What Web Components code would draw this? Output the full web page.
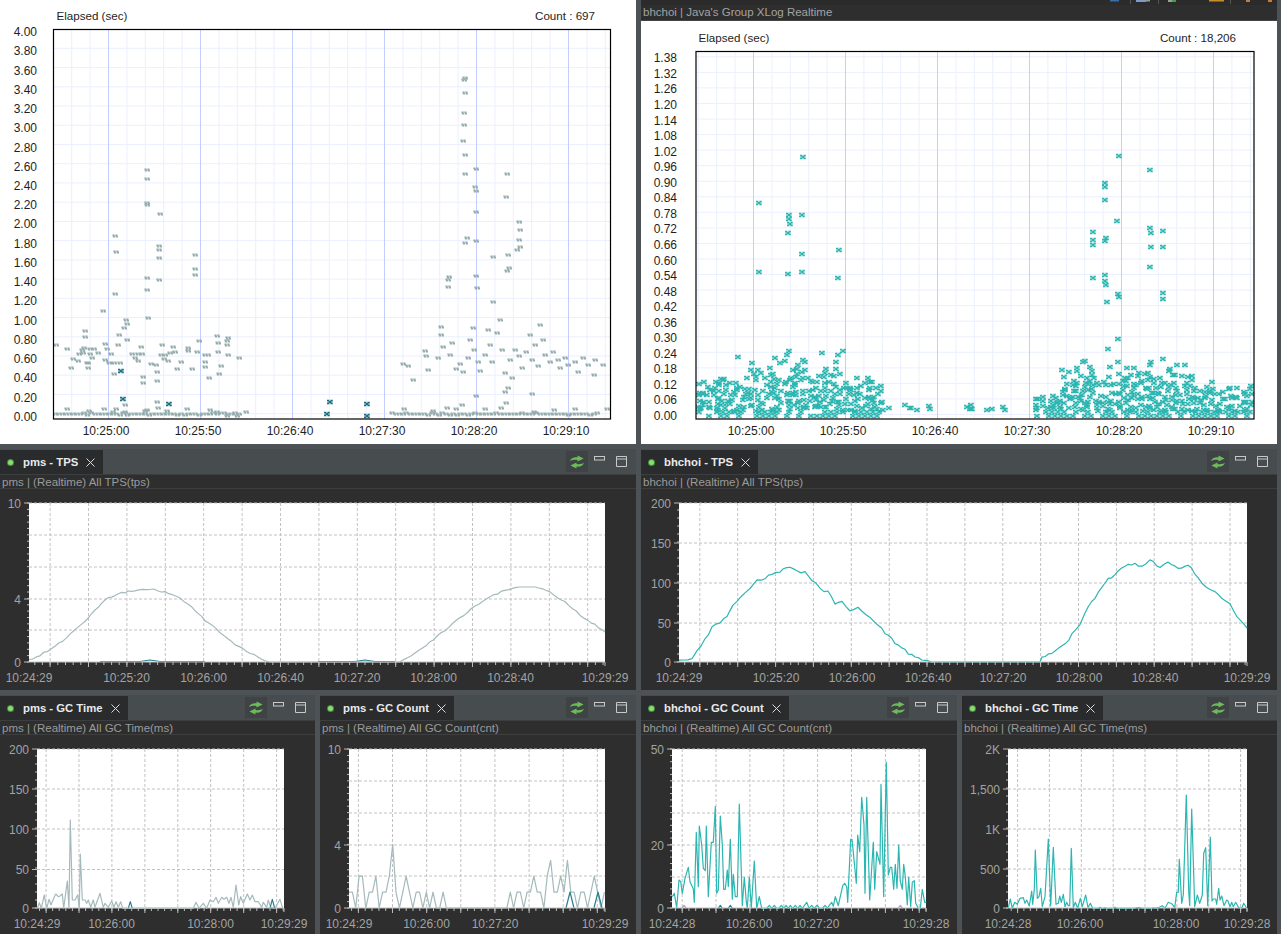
<!DOCTYPE html>
<html>
<head>
<meta charset="utf-8">
<title>Scouter dashboard</title>
<style>
    html, body { margin: 0; padding: 0; background: #4d5256; }
    body { width: 1281px; height: 934px; overflow: hidden; font-family: "Liberation Sans", Arial, sans-serif; }
</style>
</head>
<body>
<dash-board>
    <xlog-panel style="grid-column: span 2" name="pms"></xlog-panel>
    <xlog-panel style="grid-column: span 2" name="bhchoi" heading="bhchoi | Java's Group XLog Realtime"></xlog-panel>
    <trend-panel style="grid-column: span 2" name="pmsTps" tab="pms - TPS" sub="pms | (Realtime) All TPS(tps)"></trend-panel>
    <trend-panel style="grid-column: span 2" name="bhchoiTps" tab="bhchoi - TPS" sub="bhchoi | (Realtime) All TPS(tps)"></trend-panel>
    <trend-panel name="pmsGcTime" tab="pms - GC Time" sub="pms | (Realtime) All GC Time(ms)"></trend-panel>
    <trend-panel name="pmsGcCount" tab="pms - GC Count" sub="pms | (Realtime) All GC Count(cnt)"></trend-panel>
    <trend-panel name="bhchoiGcCount" tab="bhchoi - GC Count" sub="bhchoi | (Realtime) All GC Count(cnt)"></trend-panel>
    <trend-panel name="bhchoiGcTime" tab="bhchoi - GC Time" sub="bhchoi | (Realtime) All GC Time(ms)"></trend-panel>
</dash-board>

<script>
const GREY = '#a5babc';
const TEAL = '#2db6b1';
const DARK = '#2a7f8e';

function seeded(seed) {
    let s = seed;
    return () => {
        s = (s * 1664525 + 1013904223) % 4294967296;
        return s / 4294967296;
    };
}

// coordinates read off the zoomed crops, 3x from the given origin
function fromZoom(list, ox, oy) {
    return list.map(([x, y]) => [ox + x / 3, oy + y / 3]);
}

function makePath(points) {
    return points.map((p, i) => (i ? 'L' : 'M') + p[0].toFixed(1) + ' ' + p[1].toFixed(1)).join('');
}

function jag(points, amount, seed) {
    const rnd = seeded(seed);
    const out = [];
    for (let i = 0; i < points.length - 1; i++) {
        const [x1, y1] = points[i];
        const [x2, y2] = points[i + 1];
        const n = Math.max(1, Math.round((x2 - x1) / 4));
        for (let k = 0; k < n; k++) {
            const t = k / n;
            const flat = y1 === y2;
            out.push([x1 + (x2 - x1) * t, y1 + (y2 - y1) * t + (flat ? 0 : (rnd() - 0.5) * amount)]);
        }
    }
    out.push(points[points.length - 1]);
    return out;
}

const PMS_TPS = [[29,660],[40,655],[55,647],[70,634],[85,621],[95,610],[105,600],[115,595],[125,592],[135,591],[150,589],[165,592],[180,598],[195,610],[205,620],[220,632],[235,645],[250,653],[262,659],[270,662],[400,662],[415,653],[430,642],[445,630],[460,618],[475,606],[490,597],[505,590],[520,587],[535,587],[550,592],[565,602],[580,615],[595,625],[605,632]];
const BH_TPS = [[679,661],[692,660],[697,650],[705,640],[712,628],[720,622],[727,617],[733,605],[741,597],[750,588],[757,581],[765,578],[772,575],[780,572],[790,566],[797,570],[805,573],[812,580],[820,589],[828,592],[835,603],[842,600],[850,612],[858,607],[866,615],[875,622],[885,633],[895,643],[905,650],[915,658],[925,661],[935,662],[1040,662],[1042,658],[1052,653],[1062,647],[1072,635],[1080,625],[1085,612],[1095,597],[1105,582],[1115,575],[1125,565],[1135,563],[1142,567],[1150,560],[1160,568],[1168,562],[1178,568],[1188,565],[1198,577],[1206,588],[1215,592],[1222,600],[1230,605],[1240,620],[1247,628]];

const PMS_GC_TIME = fromZoom([[112,265],[118,248],[124,265],[133,225],[140,265],[147,238],[153,255],[160,238],[167,222],[175,230],[180,228],[187,222],[191,265],[202,183],[207,265],[211,0],[217,240],[225,240],[233,225],[238,265],[241,102],[247,240],[255,240],[260,250],[265,240],[272,262],[280,240],[285,262],[300,220],[310,262],[315,250],[325,262],[335,243],[342,262],[348,245],[355,262],[362,245],[368,265],[580,265],[588,247],[597,265],[610,250],[620,265],[630,240],[640,245],[648,232],[655,250],[665,232],[672,238],[680,232],[687,250],[693,232],[700,262],[708,195],[716,255],[722,230],[730,250],[742,222],[750,240],[757,225],[765,245],[775,245],[785,262],[790,247],[800,262],[805,240],[812,262],[825,265],[840,238],[848,265]], 0, 820);
const PMS_GC_DARK = fromZoom([[385,265],[391,245],[397,265]], 0, 820);
const PMS_GC_DARK2 = fromZoom([[810,265],[817,238],[824,265]], 0, 820);

const GC_COUNT_VALUES = [1,1,0,2,2,0,1,1,2,0,1,1,2,4,1,0,1,2,1,0,1,1,0,1,0,1,0,0,1,0,0,0,0,0,0,0,0,0,0,0,0,0,0,0,0,0,0,0,1,0,1,1,0,1,1,2,1,1,0,2,3,1,1,2,1,3,1,1,0,1,1,0,1,2,1,0,1];
const PMS_GC_COUNT = GC_COUNT_VALUES.map((v, i) => [349 + i * 3.36, 908 - v * 15.9]);

const BH_GC_COUNT = fromZoom([[22,455],[28,445],[35,488],[42,405],[47,410],[52,445],[60,400],[70,367],[75,410],[85,432],[88,472],[94,262],[100,425],[103,243],[110,300],[115,370],[121,377],[124,243],[130,455],[139,292],[145,292],[151,185],[155,445],[160,435],[166,213],[172,300],[176,433],[181,433],[187,375],[190,425],[196,283],[202,463],[205,388],[211,455],[217,455],[223,177],[229,380],[232,482],[238,397],[244,470],[247,490],[253,397],[259,488],[268,348],[275,490],[283,455],[290,490],[305,490],[313,481],[320,490],[328,481],[335,490],[342,490],[349,481],[356,490],[363,481],[370,490],[376,481],[383,490],[391,481],[398,490],[405,481],[412,490],[425,472],[432,490],[440,481],[447,490],[457,481],[464,490],[472,490],[480,481],[487,490],[493,481],[500,472],[505,484],[511,455],[520,482],[533,422],[539,415],[545,425],[548,472],[557,283],[561,283],[574,415],[578,270],[584,320],[590,157],[597,240],[600,445],[605,157],[614,465],[625,292],[629,433],[635,320],[645,358],[648,118],[656,455],[664,52],[670,390],[676,367],[680,367],[686,433],[691,358],[696,430],[701,300],[706,408],[712,433],[716,358],[721,395],[727,480],[731,397],[737,485],[742,412],[748,407],[752,475],[760,490],[766,490],[772,433],[779,472],[784,472]], 665, 745);
const BH_GC_COUNT_DARK = fromZoom([[160,490],[166,481],[172,490]], 665, 745);
const BH_GC_COUNT_DARK2 = fromZoom([[190,490],[196,481],[202,490]], 665, 745);
const BH_GC_COUNT_PINK = fromZoom([[50,490],[57,481],[64,490]], 665, 745);
const BH_GC_COUNT_PINK2 = fromZoom([[699,490],[706,481],[713,490]], 665, 745);

const BH_GC_TIME = fromZoom([[25,488],[31,462],[37,490],[44,472],[52,478],[60,460],[70,458],[75,475],[80,465],[88,483],[95,438],[98,478],[103,433],[106,315],[112,460],[117,455],[122,430],[127,485],[135,455],[145,282],[152,483],[160,307],[168,478],[175,475],[179,453],[184,472],[190,448],[195,485],[200,472],[205,482],[209,482],[214,310],[220,488],[226,472],[233,490],[241,460],[247,485],[257,450],[264,488],[271,475],[278,490],[295,490],[300,487],[305,490],[310,490],[315,488],[320,490],[340,490],[345,487],[350,490],[405,490],[410,488],[420,488],[425,490],[455,490],[460,488],[465,490],[475,488],[487,482],[495,490],[505,472],[515,476],[524,488],[530,442],[535,442],[538,343],[545,475],[550,450],[559,150],[566,438],[569,482],[575,192],[584,485],[592,450],[599,475],[607,450],[611,325],[617,308],[623,482],[631,276],[636,468],[640,462],[647,462],[650,478],[656,430],[660,465],[665,453],[672,482],[680,465],[684,468],[690,485],[695,472],[700,485],[707,472],[716,488],[725,490],[731,475],[740,490]], 1000, 745);

const TREND_CONFIG = {
    pmsTps: {
        box: [0, 449, 636, 241], plot: [29, 503, 605, 662], start: 11, step: 20,
        yLabels: [['10', 503], ['4', 599], ['0', 662]], hLines: [535, 567, 599, 630], minorY: 6.36,
        xLabels: [['10:24:29', 29], ['10:25:20', 126.5], ['10:26:00', 203.5], ['10:26:40', 280.5], ['10:27:20', 357], ['10:28:00', 433.5], ['10:28:40', 510.5], ['10:29:29', 605]],
        lines: [
            { d: jag(PMS_TPS, 1.8, 7), color: GREY },
            { d: [[100,661.5],[140,661.5],[150,660],[160,661.5],[205,661.5]], color: DARK },
            { d: [[318,661.5],[355,661.5],[365,660],[375,661.5],[395,661.5]], color: DARK }
        ]
    },
    bhchoiTps: {
        box: [641, 449, 636, 241], plot: [679, 503, 1247, 662], start: 11, step: 20,
        yLabels: [['200', 503], ['150', 543], ['100', 583], ['50', 623], ['0', 662]], hLines: [543, 583, 623], minorY: 8,
        xLabels: [['10:24:29', 679], ['10:25:20', 776], ['10:26:00', 852], ['10:26:40', 928], ['10:27:20', 1003], ['10:28:00', 1079], ['10:28:40', 1155], ['10:29:29', 1247]],
        lines: [{ d: jag(BH_TPS, 3, 11), color: TEAL }]
    },
    pmsGcTime: {
        box: [0, 695, 315, 239], plot: [37, 749, 284, 908], start: 11, step: 40,
        yLabels: [['200', 749], ['150', 789], ['100', 829], ['50', 869.5], ['0', 908]], hLines: [789, 829, 869.5], minorY: 8,
        xLabels: [['10:24:29', 37], ['10:26:00', 111.5], ['10:28:00', 210.5], ['10:29:29', 284]],
        lines: [{ d: PMS_GC_TIME, color: GREY }, { d: PMS_GC_DARK, color: DARK }, { d: PMS_GC_DARK2, color: DARK }]
    },
    pmsGcCount: {
        box: [320, 695, 316, 239], plot: [349, 749, 605, 908], start: 11, step: 40,
        yLabels: [['10', 749], ['4', 845], ['0', 908]], hLines: [781, 813, 845, 876], minorY: 6.36,
        xLabels: [['10:24:29', 349], ['10:26:00', 426.5], ['10:27:20', 495], ['10:29:29', 605]],
        lines: [
            { d: PMS_GC_COUNT, color: GREY },
            { d: [[566,908],[570,892],[574,908]], color: DARK },
            { d: [[594,908],[598,892],[602,908]], color: DARK }
        ]
    },
    bhchoiGcCount: {
        box: [641, 695, 316, 239], plot: [672, 749, 926, 908], start: 12, step: 40,
        yLabels: [['50', 749], ['20', 845], ['0', 908]], hLines: [781, 813, 845, 877], minorY: 6.36,
        xLabels: [['10:24:28', 672], ['10:26:00', 749], ['10:27:20', 816], ['10:29:28', 926]],
        lines: [
            { d: BH_GC_COUNT, color: TEAL },
            { d: BH_GC_COUNT_DARK, color: DARK },
            { d: BH_GC_COUNT_DARK2, color: DARK },
            { d: BH_GC_COUNT_PINK, color: '#b79cc4' },
            { d: BH_GC_COUNT_PINK2, color: '#b79cc4' }
        ]
    },
    bhchoiGcTime: {
        box: [962, 695, 315, 239], plot: [1008, 749, 1247, 908], start: 12, step: 40,
        yLabels: [['2K', 749], ['1,500', 789], ['1K', 829], ['500', 869], ['0', 908]], hLines: [789, 829, 869], minorY: 8,
        xLabels: [['10:24:28', 1008], ['10:26:00', 1080], ['10:28:00', 1176], ['10:29:28', 1247]],
        lines: [{ d: BH_GC_TIME, color: TEAL }]
    }
};

const PMS_MARKS = fromZoom([[106,3],[105,22],[103,53],[120,57],[133,58],[120,72],[143,70],[165,42],[170,58],[182,72],[204,46],[208,16],[232,30],[272,52],[247,72],[265,72],[275,72],[255,85],[265,93],[165,90],[178,100],[193,100],[210,100],[115,100],[115,115],[110,100],[125,85],[280,140],[280,160],[322,127],[322,152],[303,103],[318,106],[335,45],[333,75],[345,75],[343,88],[355,93],[370,52],[360,70],[375,67],[393,97],[415,55],[415,62],[440,67],[448,33],[465,75],[475,75],[465,97],[465,112],[382,118],[425,118],[502,18],[505,40],[505,67],[535,25],[532,33],[532,44],[535,75],[568,85],[512,108],[508,133],[478,145],[193,132],[322,215],[325,235],[225,225],[225,245],[290,240],[163,237],[190,245],[500,245],[530,257],[560,258],[18,46],[52,58],[70,88],[85,92],[62,115],[88,72],[100,68],[95,60]], 50, 330).concat([
    [465,78],[464,80],[465,93],[464,113],[464,125],[463,141],[465,155],[465,174],[476,169],[475,187],[476,191],[507,174],[506,197],[519,222],[520,230],[519,240],[520,247],[517,250],[508,255],[509,268],[507,271],[493,257],[476,212],[476,241],[467,238],[465,243],[449,277],[448,287],[448,280],[493,302],[476,276],[477,288],
    [147,170],[147,179],[147,203],[147,205],[160,214],[115,236],[116,252],[159,246],[159,250],[159,258],[195,255],[195,269],[195,275],[147,278],[147,290],[115,294],[159,280],[103,311],[148,318],[126,320],[127,324],[124,328],
    [403,364],[408,366],[413,380],[425,351],[426,356],[428,370],[438,358],[441,327],[441,335],[450,355],[452,343],[456,369],[468,358],[470,340],[473,328],[480,371],[485,355],[488,330],[490,345],[500,320],[502,350],[508,388],[512,378],[515,350],[522,368],[530,335],[535,345],[540,325],[545,355],[550,362],[558,360],[565,358],[575,362],[578,372],[595,360],[603,365],[594,375],
    [443,347],[460,364],[463,372],[474,350],[478,362],[492,362],[497,333],[505,373],[510,360],[519,356],[526,352],[532,360],[538,366],[543,340],[553,352],[560,368],[568,365],[583,358],[588,365],[462,405],[447,408],[476,396],[505,392],[506,403],[532,394]
]);
const PMS_DARK_MARKS = [[121,371],[123,399],[169,404],[330,402],[327,414],[367,404],[367,416]];

const BH_MARKS = [[803,157],[759,203],[789,215],[802,215],[789,219],[790,224],[788,233],[802,254],[839,250],[759,272],[788,274],[802,272],[838,278],[738,357],[789,351],[803,360],[822,353],[836,362],[843,351],[1119,156],[1150,170],[1105,183],[1105,187],[1105,200],[1117,221],[1150,228],[1151,233],[1163,231],[1093,232],[1093,240],[1093,245],[1106,238],[1105,241],[1151,247],[1163,247],[1150,267],[1093,278],[1105,275],[1105,281],[1106,285],[1118,294],[1119,297],[1163,293],[1163,299],[1107,302],[1118,339],[1108,349],[1163,359],[1150,365],[1118,362]];

// lower mass of the right chart, one dot per small cell so white shows between dots
function buildBhMarks() {
    const rnd = seeded(42);
    const seen = new Set();
    const out = BH_MARKS.slice();
    const bands = [[697, 745, 36, 170], [745, 840, 58, 330], [840, 882, 38, 130], [882, 932, 9, 14], [965, 1006, 8, 9], [1035, 1062, 18, 50], [1062, 1195, 52, 480], [1195, 1252, 30, 130]];
    bands.forEach(([a, b, high, count]) => {
        for (let i = 0; i < count; i++) {
            const fall = rnd() * (0.25 + 0.75 * rnd());
            const x = a + rnd() * (b - a);
            const y = 411 - fall * high;
            const key = Math.round(x / 5.5) + '/' + Math.round(y / 4.6);
            if (seen.has(key)) continue;
            seen.add(key);
            out.push([x, y]);
        }
    });
    return out;
}

function bhBottomBand() {
    const rnd = seeded(9);
    const rows = [];
    [[697, 882, 416], [1037, 1252, 416], [699, 880, 412], [1040, 1252, 412]].forEach(([a, b, y]) => {
        for (let x = a; x < b; x += 6) {
            if (rnd() > 0.25) rows.push([x, y]);
        }
    });
    return rows;
}

function pmsBottomBand() {
    const rnd = seeded(5);
    const out = [];
    [[55, 240], [392, 600]].forEach(([a, b]) => {
        for (let x = a; x < b; x += 3.6) out.push([x, 414 + (rnd() - 0.5) * 1.4]);
        for (let x = a + 10; x < b; x += 24) out.push([x + rnd() * 14, 408 + rnd() * 4]);
    });
    return out;
}

function markPath(points, big) {
    // each xlog dot is a tiny two row "x" of pixels
    const shape = big
        ? (x, y) => `M${x - 3} ${y - 2.2}h2.4v1.6h-2.4zM${x + 0.4} ${y - 2.2}h2.4v1.6h-2.4zM${x - 1.4} ${y - 1}h2.8v2h-2.8zM${x - 3} ${y + 0.6}h2.4v1.6h-2.4zM${x + 0.4} ${y + 0.6}h2.4v1.6h-2.4z`
        : (x, y) => `M${x - 2.6} ${y - 1.6}h2.3v1.5h-2.3zM${x + 0.3} ${y - 1.6}h2.3v1.5h-2.3zM${x - 2.2} ${y + 0.1}h2.3v1.5h-2.3zM${x + 0.7} ${y + 0.1}h2.3v1.5h-2.3z`;
    return points.map(([x, y]) => shape(Math.round(x), Math.round(y))).join('');
}

const XLOG_CONFIG = {
    pms: {
        box: [0, 0, 636, 444], plot: [53.5, 29.5, 610.5, 419], count: 'Count : 697', countEnd: 595, titleX: 56.5, titleY: 20, countY: 20,
        xMajor: 108.5, xStep: 18.4, xLabelShift: -2.5,
        yZero: 413.7, yStep: 19.23, ySteps: 20, yUnit: 0.2, yFixed: 2, yLabelEnd: 37, yLabelShift: 3,
        layers: [
            { d: markPath(pmsBottomBand().concat(PMS_MARKS), false), color: '#95acae' },
            { d: markPath(PMS_DARK_MARKS, true), color: '#1c6f80' }
        ],
        xLabelY: 435
    },
    bhchoi: {
        box: [641, 21, 636, 423], plot: [696, 51.5, 1254, 419], count: 'Count : 18,206', countEnd: 1236, titleX: 698.5, titleY: 42, countY: 42,
        xMajor: 753.5, xStep: 18.4, xLabelShift: -2.5,
        yZero: 414.5, yStep: 15.55, ySteps: 23, yUnit: 0.06, yFixed: 2, yLabelEnd: 677, yLabelShift: 1.5,
        layers: [
            { d: markPath(bhBottomBand().concat(buildBhMarks()), true), color: TEAL }
        ],
        xLabelY: 435
    }
};

class DashBoard extends HTMLElement {
    constructor() {
        super();
        this.attachShadow({ mode: 'open' });
        this.shadowRoot.innerHTML = `
            <style>
                :host {
                    display: grid;
                    width: 1281px;
                    height: 934px;
                    box-sizing: border-box;
                    padding-right: 4px;
                    grid-template-columns: 315px 316px 316px 315px;
                    grid-template-rows: 444px 241px 239px;
                    column-gap: 5px;
                    row-gap: 5px;
                    background: #4d5256;
                }
            </style>
            <slot></slot>
        `;
    }
}

class ViewHead extends HTMLElement {
    constructor() {
        super();
        this.attachShadow({ mode: 'open' });
        this.shadowRoot.innerHTML = `
            <style>
                :host {
                    display: flex;
                    height: 26px;
                    flex: none;
                    align-items: stretch;
                    background: #474c4f;
                    border-bottom: 1px solid #3b3d3f;
                    box-sizing: border-box;
                    font: bold 11.3px "Liberation Sans", Arial, sans-serif;
                    color: #e9e9e9;
                }
                .tab {
                    display: flex;
                    align-items: center;
                    padding: 0 8px 0 8px;
                    margin-top: 1px;
                    background: #2a2b2c;
                }
                .dot {
                    width: 5px;
                    height: 5px;
                    border-radius: 50%;
                    background: #86e06a;
                    box-shadow: 0 0 0 1px #4c8a44;
                    margin-right: 10px;
                }
                .title { margin-right: 8px; white-space: nowrap; }
                .tools { display: flex; margin-left: auto; margin-right: 4px; }
                .tool { display: flex; width: 22px; align-items: center; justify-content: center; }
                .tool.on { background: #3f4345; height: 21px; margin-top: 2px; }
                svg { display: block; }
            </style>
            <div class="tab">
                <span class="dot"></span>
                <span class="title"></span>
                <svg width="9" height="9" viewBox="0 0 9 9"><path d="M.5.5l8 8M8.5.5l-8 8" stroke="#dcdcdc" fill="none"/></svg>
            </div>
            <div class="tools">
                <div class="tool on">
                    <svg width="16" height="14" viewBox="0 0 16 14">
                        <path d="M1 6.2C2 3 5 2 8.5 2.4V.6L14.6 3.6 8.5 6.6V5C6 4.6 3 4.8 1 6.2Z" fill="#6cbb5a"/>
                        <path d="M15 7.8C14 11 11 12 7.5 11.6v1.8L1.4 10.4 7.5 7.4V9C10 9.4 13 9.2 15 7.8Z" fill="#6cbb5a"/>
                    </svg>
                </div>
                <div class="tool" style="align-items:flex-start;padding-top:7px;box-sizing:border-box">
                    <svg width="11" height="5" viewBox="0 0 11 5"><rect x=".5" y=".5" width="10" height="3.5" fill="none" stroke="#c9c9c9"/></svg>
                </div>
                <div class="tool">
                    <svg width="11" height="11" viewBox="0 0 11 11"><path d="M.5.5h10v10H.5zM.5 3h10" fill="none" stroke="#c9c9c9"/></svg>
                </div>
            </div>
        `;
    }

    connectedCallback() {
        this.shadowRoot.querySelector('.title').textContent = this.getAttribute('tab');
    }
}

class TrendPanel extends HTMLElement {
    constructor() {
        super();
        this.attachShadow({ mode: 'open' });
    }

    connectedCallback() {
        this.render();
    }

    chartMarkup(conf) {
        const [bx, by, bw, bh] = conf.box;
        const [left, top, right, bottom] = conf.plot;
        const top0 = by + 40;
        const scale = (right - left) / 300;
        let grid = '';
        let ticks = '';
        for (let t = conf.start; t < 300; t += conf.step) {
            const x = (left + t * scale).toFixed(1);
            grid += `<path d="M${x} ${top}V${bottom}"/>`;
            ticks += `<path d="M${x} ${bottom}v5"/>`;
        }
        for (let t = conf.start % (conf.step / 5); t <= 300; t += conf.step / 5) {
            ticks += `<path d="M${(left + t * scale).toFixed(1)} ${bottom}v3"/>`;
        }
        conf.hLines.forEach(y => { grid += `<path d="M${left} ${y}H${right}"/>`; });
        grid += `<path d="M${left} ${top}H${right}"/>`;
        for (let y = bottom; y >= top - 0.5; y -= conf.minorY) {
            ticks += `<path d="M${left} ${y.toFixed(1)}h-2"/>`;
        }
        const yText = conf.yLabels.map(([label, y]) => {
            ticks += `<path d="M${left} ${y}h-5"/>`;
            return `<text x="${left - 8}" y="${y + 4.5}" text-anchor="end">${label}</text>`;
        }).join('');
        const xText = conf.xLabels.map(([label, x]) =>
            `<text x="${x}" y="${bottom + 19.5}" text-anchor="middle">${label}</text>`).join('');
        const lines = conf.lines.map(line =>
            `<path d="${makePath(line.d)}" fill="none" stroke="${line.color}" stroke-width="1.2" stroke-linejoin="round"/>`).join('');
        return `
            <svg viewBox="${bx} ${top0} ${bw} ${by + bh - top0}" width="${bw}" height="${by + bh - top0}">
                <rect x="${left}" y="${top}" width="${right - left}" height="${bottom - top}" fill="#fff"/>
                <g stroke="#c2c2c2" stroke-dasharray="3 2" fill="none">${grid}</g>
                ${lines}
                <g stroke="#bcbcbc" fill="none">${ticks}<path d="M${left} ${bottom}H${right}v4"/></g>
                <g font-family="'Liberation Sans', Arial, sans-serif" font-size="12" fill="#a3a3a3">${yText}${xText}</g>
            </svg>
        `;
    }

    render() {
        const conf = TREND_CONFIG[this.getAttribute('name')];
        this.shadowRoot.innerHTML = `
            <style>
                :host {
                    display: flex;
                    flex-direction: column;
                    background: #2e2e2e;
                    overflow: hidden;
                    min-width: 0;
                }
                .sub {
                    height: 14px;
                    flex: none;
                    box-sizing: border-box;
                    padding-left: 2px;
                    border-bottom: 1px solid #3e3e3e;
                    font: 11.5px/15px "Liberation Sans", Arial, sans-serif;
                    color: #9b9b9b;
                    white-space: nowrap;
                }
                svg { display: block; }
            </style>
            <view-head tab="${this.getAttribute('tab')}"></view-head>
            <div class="sub">${this.getAttribute('sub')}</div>
            ${this.chartMarkup(conf)}
        `;
    }
}

class XlogPanel extends HTMLElement {
    constructor() {
        super();
        this.attachShadow({ mode: 'open' });
    }

    connectedCallback() {
        this.render();
    }

    chartMarkup(conf) {
        const [bx, by, bw, bh] = conf.box;
        const [left, top, right, bottom] = conf.plot;
        let minor = '';
        let major = '';
        let yText = '';
        for (let i = -3; i < 33; i++) {
            const x = conf.xMajor + i * conf.xStep;
            if (x <= left || x >= right) continue;
            const line = `<path d="M${x.toFixed(1)} ${top}V${bottom}"/>`;
            if (((i % 5) + 5) % 5 === 0) major += line;
            else minor += line;
        }
        for (let i = 0; i <= conf.ySteps; i++) {
            const y = conf.yZero - i * conf.yStep;
            if (y > top + 1) minor += `<path d="M${left} ${y.toFixed(1)}H${right}"/>`;
            yText += `<text x="${conf.yLabelEnd}" y="${(y + conf.yLabelShift + 4).toFixed(1)}" text-anchor="end">${(i * conf.yUnit).toFixed(conf.yFixed)}</text>`;
        }
        const times = ['10:25:00', '10:25:50', '10:26:40', '10:27:30', '10:28:20', '10:29:10'];
        const xText = times.map((label, i) =>
            `<text x="${conf.xMajor + i * 92 + conf.xLabelShift}" y="${conf.xLabelY}" text-anchor="middle">${label}</text>`).join('');
        const clipId = 'clip-' + this.getAttribute('name');
        const layers = conf.layers.map(l => `<path d="${l.d}" fill="${l.color}"/>`).join('');
        return `
            <svg viewBox="${bx} ${by} ${bw} ${bh}" width="${bw}" height="${bh}">
                <defs><clipPath id="${clipId}"><rect x="${left}" y="${top}" width="${right - left}" height="${bottom - top}"/></clipPath></defs>
                <g stroke="#ebefff" fill="none">${minor}</g>
                <g stroke="#c3ceff" fill="none">${major}</g>
                <g clip-path="url(#${clipId})">${layers}</g>
                <rect x="${left}" y="${top}" width="${right - left}" height="${bottom - top}" fill="none" stroke="#000" stroke-width="1.2"/>
                <g font-family="'Liberation Sans', Arial, sans-serif" font-size="12" fill="#1e1e1e">
                    ${yText}${xText}
                </g>
                <g font-family="'Liberation Sans', Arial, sans-serif" font-size="11.6" fill="#1e1e1e">
                    <text x="${conf.titleX}" y="${conf.titleY}">Elapsed (sec)</text>
                    <text x="${conf.countEnd}" y="${conf.countY}" text-anchor="end">${conf.count}</text>
                </g>
            </svg>
        `;
    }

    render() {
        const conf = XLOG_CONFIG[this.getAttribute('name')];
        const heading = this.getAttribute('heading');
        this.shadowRoot.innerHTML = `
            <style>
                :host {
                    display: flex;
                    flex-direction: column;
                    background: #fff;
                    overflow: hidden;
                }
                .strip { display: block; height: 5px; flex: none; background: #2b2b2b; }
                .heading {
                    height: 16px;
                    flex: none;
                    box-sizing: border-box;
                    padding-left: 2px;
                    background: #2e2e2e;
                    border-bottom: 1px solid #454545;
                    font: 11.5px/14px "Liberation Sans", Arial, sans-serif;
                    color: #a3a3a3;
                    white-space: nowrap;
                }
                svg { display: block; }
            </style>
            ${heading ? `
            <svg class="strip" width="636" height="5" viewBox="641 0 636 5">
                <rect x="1110" y="0" width="9" height="1.5" fill="#3a6ea5"/>
                <rect x="1136" y="0" width="10" height="2" fill="#7d9cc4"/>
                <rect x="1146" y="0" width="4" height="1.5" fill="#9a9a9a"/>
                <rect x="1168" y="0" width="4" height="2" fill="#9aa09a"/>
                <rect x="1172" y="0" width="4" height="2" fill="#4b9a4b"/>
                <rect x="1209" y="0" width="15" height="1.5" fill="#c88d2c"/>
                <rect x="1246" y="0" width="4" height="2" fill="#c87a3a"/>
                <rect x="1268" y="0" width="4" height="2" fill="#c87a3a"/>
                <path d="M1130.5 0v4M1158.5 0v4M1230.5 0v4" stroke="#555"/>
            </svg>
            <div class="heading">${heading}</div>` : ''}
            ${this.chartMarkup(conf)}
        `;
    }
}

customElements.define('dash-board', DashBoard);
customElements.define('view-head', ViewHead);
customElements.define('trend-panel', TrendPanel);
customElements.define('xlog-panel', XlogPanel);
</script>
</body>
</html>
